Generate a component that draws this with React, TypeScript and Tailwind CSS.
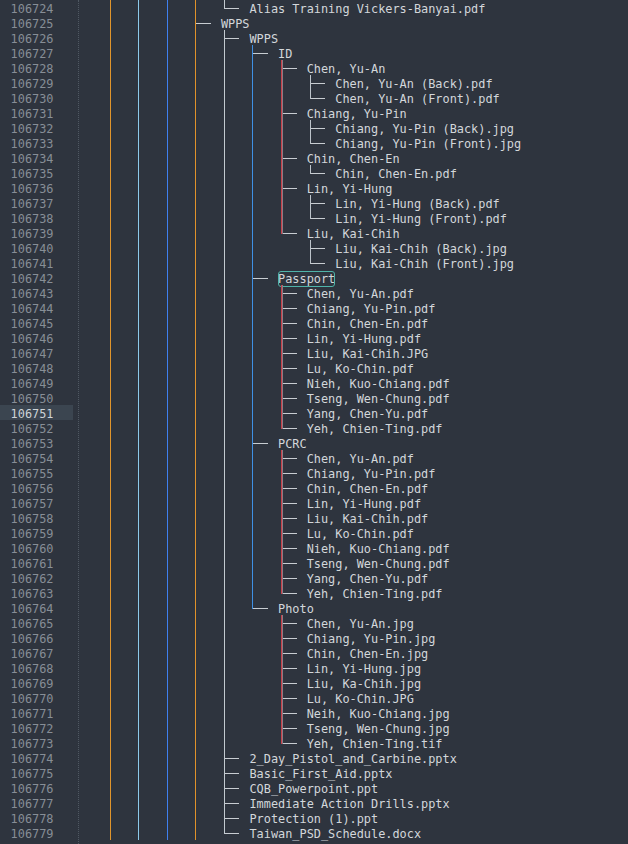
import React from "react";

// indent guide colours, one per tree column
const GUIDE = [
  "bg-[#e0952c]",
  "bg-[#8ccaea]",
  "bg-[#3f80f0]",
  "bg-[#e0922a]",
  "bg-[#c2cad0]",
  "bg-[#3f90e4]",
  "bg-[#c8404a]",
  "bg-[#bcc3ca]",
];

const P = "│   │   │   │   ";

const LINES: string[] = [
  P + "└── Alias Training Vickers-Banyai.pdf",
  "│   │   │   ├── WPPS",
  P + "├── WPPS",
  P + "│   ├── ID",
  P + "│   │   ├── Chen, Yu-An",
  P + "│   │   │   ├── Chen, Yu-An (Back).pdf",
  P + "│   │   │   └── Chen, Yu-An (Front).pdf",
  P + "│   │   ├── Chiang, Yu-Pin",
  P + "│   │   │   ├── Chiang, Yu-Pin (Back).jpg",
  P + "│   │   │   └── Chiang, Yu-Pin (Front).jpg",
  P + "│   │   ├── Chin, Chen-En",
  P + "│   │   │   └── Chin, Chen-En.pdf",
  P + "│   │   ├── Lin, Yi-Hung",
  P + "│   │   │   ├── Lin, Yi-Hung (Back).pdf",
  P + "│   │   │   └── Lin, Yi-Hung (Front).pdf",
  P + "│   │   └── Liu, Kai-Chih",
  P + "│   │       ├── Liu, Kai-Chih (Back).jpg",
  P + "│   │       └── Liu, Kai-Chih (Front).jpg",
  P + "│   ├── Passport",
  P + "│   │   ├── Chen, Yu-An.pdf",
  P + "│   │   ├── Chiang, Yu-Pin.pdf",
  P + "│   │   ├── Chin, Chen-En.pdf",
  P + "│   │   ├── Lin, Yi-Hung.pdf",
  P + "│   │   ├── Liu, Kai-Chih.JPG",
  P + "│   │   ├── Lu, Ko-Chin.pdf",
  P + "│   │   ├── Nieh, Kuo-Chiang.pdf",
  P + "│   │   ├── Tseng, Wen-Chung.pdf",
  P + "│   │   ├── Yang, Chen-Yu.pdf",
  P + "│   │   └── Yeh, Chien-Ting.pdf",
  P + "│   ├── PCRC",
  P + "│   │   ├── Chen, Yu-An.pdf",
  P + "│   │   ├── Chiang, Yu-Pin.pdf",
  P + "│   │   ├── Chin, Chen-En.pdf",
  P + "│   │   ├── Lin, Yi-Hung.pdf",
  P + "│   │   ├── Liu, Kai-Chih.pdf",
  P + "│   │   ├── Lu, Ko-Chin.pdf",
  P + "│   │   ├── Nieh, Kuo-Chiang.pdf",
  P + "│   │   ├── Tseng, Wen-Chung.pdf",
  P + "│   │   ├── Yang, Chen-Yu.pdf",
  P + "│   │   └── Yeh, Chien-Ting.pdf",
  P + "│   └── Photo",
  P + "│       ├── Chen, Yu-An.jpg",
  P + "│       ├── Chiang, Yu-Pin.jpg",
  P + "│       ├── Chin, Chen-En.jpg",
  P + "│       ├── Lin, Yi-Hung.jpg",
  P + "│       ├── Liu, Ka-Chih.jpg",
  P + "│       ├── Lu, Ko-Chin.JPG",
  P + "│       ├── Neih, Kuo-Chiang.jpg",
  P + "│       ├── Tseng, Wen-Chung.jpg",
  P + "│       └── Yeh, Chien-Ting.tif",
  P + "├── 2_Day_Pistol_and_Carbine.pptx",
  P + "├── Basic_First_Aid.pptx",
  P + "├── CQB_Powerpoint.ppt",
  P + "├── Immediate Action Drills.pptx",
  P + "├── Protection (1).ppt",
  P + "└── Taiwan_PSD_Schedule.docx",
];

const FIRST = 106724;
const CURRENT = 106751;
const CHUNKS = ["│   ", "    ", "├── ", "└── "];

function parse(line: string) {
  const cells: string[] = [];
  let rest = line;
  while (CHUNKS.some((c) => rest.startsWith(c))) {
    cells.push(rest[0]);
    rest = rest.slice(4);
  }
  return { cells, label: rest };
}

function Cell({ kind, col }: { kind: string; col: number }) {
  const h = kind === "└" ? "h-[9px]" : "h-[15px]";
  return (
    <div className="w-[28.6px] h-[15px] shrink-0 flex items-start">
      {kind !== " " && (
        <>
          <div className={`ml-[3px] w-px shrink-0 ${h} ${GUIDE[col] ?? GUIDE[7]}`} />
          {col === 6 && <div className={`w-px shrink-0 ${h} bg-[#8d7c84]`} />}
          {kind !== "│" && (
            <div className={`mt-[8px] h-px shrink-0 bg-[#c8cdd2] ${col === 6 ? "w-[13.5px]" : "w-[14.5px]"}`} />
          )}
        </>
      )}
    </div>
  );
}

export default function App() {
  return (
    <main
      className="min-h-screen bg-[#2e343e] flex text-[11.88px] leading-[15px]"
      style={{ fontFamily: '"DejaVu Sans Mono", "Liberation Mono", monospace' }}
    >
      <div className="w-[73px] shrink-0">
        {LINES.map((_, i) => {
          const n = FIRST + i;
          const cur = n === CURRENT;
          return (
            <div
              key={n}
              className={
                cur
                  ? "h-[15px] pt-[2px] pr-[19.5px] text-right bg-[#3b4550] text-[#cdd3d8]"
                  : "h-[15px] pt-[2px] pr-[19.5px] text-right text-[#878e96]"
              }
            >
              {n}
            </div>
          );
        })}
      </div>
      <div className="w-[28.5px] ml-[5px] shrink-0 border-l border-dotted border-[#4f5862]" />
      <div className="flex-1 whitespace-pre text-[#d3d7db]">
        {LINES.map((line, i) => {
          const { cells, label } = parse(line);
          return (
            <div key={i} className="h-[15px] flex items-start">
              {cells.map((k, j) => (
                <Cell key={j} kind={k} col={j} />
              ))}
              {label === "Passport" ? (
                <span className="mt-[1px] pt-[1px] h-[16px] leading-[15px] rounded-[3px] outline outline-1 -outline-offset-1 outline-[#4fb3a9]">
                  {label}
                </span>
              ) : (
                <span className="pt-[2px]">{label}</span>
              )}
            </div>
          );
        })}
      </div>
    </main>
  );
}
